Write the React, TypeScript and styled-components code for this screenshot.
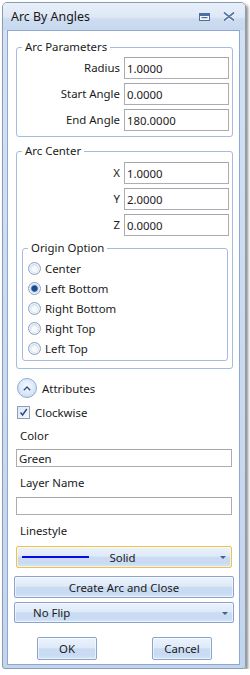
import React from 'react';
import styled, { createGlobalStyle } from 'styled-components';

const GlobalStyle = createGlobalStyle`
  html, body {
    margin: 0;
    padding: 0;
    background: #ffffff;
  }
  body {
    font-family: "Noto Sans", "Open Sans", sans-serif;
    font-size: 11.4px;
    color: #1a1a1a;
  }
`;

const Window = styled.div`
  box-sizing: border-box;
  margin: 2px 0 0 2px;
  width: 244px;
  height: 667px;
  border: 1px solid #8e9cb2;
  border-radius: 5px 5px 3px 3px;
  background: linear-gradient(#d3e1f2, #c3d5ec);
  box-shadow: 2px 2px 3px rgba(0, 0, 0, 0.45);
  display: flex;
  flex-direction: column;
  overflow: hidden;
`;

const TitleBar = styled.div`
  height: 27px;
  flex: none;
  display: flex;
  align-items: center;
  padding: 0 10px 0 8px;
  background: linear-gradient(#e6eef9 0%, #dfe9f6 50%, #cddcf0 60%, #c7d8ee 100%);
`;

const Title = styled.span`
  font-size: 12.4px;
  color: #161616;
`;

const TitleIcons = styled.div`
  margin-left: auto;
  display: flex;
  align-items: center;
  gap: 13px;
`;

const Frame = styled.div`
  flex: 1;
  display: flex;
  padding: 0 5px 3px 4px;
  min-height: 0;
`;

const Panel = styled.div`
  flex: 1;
  box-sizing: border-box;
  border: 1px solid #8ea9d1;
  background: #ffffff;
  padding: 9px 5px 0 6px;
  display: flex;
  flex-direction: column;
`;

const Group = styled.fieldset<{ $mt?: number; $ml?: number; $mr?: number; $pb?: number; $pt?: number }>`
  margin: ${p => p.$mt ?? 0}px ${p => p.$mr ?? 1}px 0 ${p => p.$ml ?? 2}px;
  border: 1px solid #a4bcde;
  border-radius: 3px;
  padding: ${p => p.$pt ?? 3}px 3px ${p => p.$pb ?? 5}px 5px;
  min-width: 0;
`;

const Legend = styled.legend`
  padding: 0 3px;
  line-height: 14px;
  color: #1a1a1a;
`;

const FieldGrid = styled.div`
  display: grid;
  grid-template-columns: 1fr 105px;
  column-gap: 4px;
  row-gap: 4px;
  align-items: center;
`;

const FieldLabel = styled.label`
  text-align: right;
  line-height: 14px;
`;

const TextBox = styled.input<{ $h?: number }>`
  box-sizing: border-box;
  width: 100%;
  height: ${p => p.$h ?? 22}px;
  margin: 0;
  border: 1px solid #abadb3;
  border-top-color: #a3a6ad;
  background: #ffffff;
  padding: 0 2px;
  font-family: inherit;
  font-size: inherit;
  color: #1a1a1a;
  outline: none;
`;

const RadioList = styled.div`
  display: flex;
  flex-direction: column;
`;

const RadioRow = styled.div`
  height: 20px;
  display: flex;
  align-items: center;
  gap: 4px;
`;

const RadioDot = styled.span<{ $checked?: boolean }>`
  box-sizing: border-box;
  width: 13px;
  height: 13px;
  border-radius: 50%;
  border: 1px solid #8da2bf;
  background: ${p =>
    p.$checked
      ? 'radial-gradient(circle, #1b4a8e 0 2.4px, #4f7bb8 3px, #cfdcec 3.8px, #e9f0f8 100%)'
      : 'radial-gradient(circle at 50% 55%, #f6f9fd 0 2.5px, #d3dfee 4.5px, #e8eef7 100%)'};
  box-shadow: inset 0 0 0 1px rgba(255, 255, 255, 0.7);
`;

const Stack = styled.div<{ $mt: number; $ml?: number }>`
  margin-top: ${p => p.$mt}px;
  margin-left: ${p => p.$ml ?? 0}px;
  display: flex;
  align-items: center;
`;

const ExpanderButton = styled.span`
  box-sizing: border-box;
  width: 20px;
  height: 20px;
  border-radius: 50%;
  border: 1px solid #8faad3;
  background: radial-gradient(circle at 50% 40%, #f7fbff 0, #d9e7f8 55%, #bcd2ef 100%);
  display: flex;
  align-items: center;
  justify-content: center;
  margin-right: 5px;
`;

const CheckBox = styled.span`
  box-sizing: border-box;
  width: 13px;
  height: 13px;
  border: 1px solid #8e9fb6;
  background: linear-gradient(135deg, #dce6f3, #f7f9fc);
  display: flex;
  align-items: center;
  justify-content: center;
  margin-right: 5px;
`;

const Caption = styled.div<{ $mt: number }>`
  margin: ${p => p.$mt}px 0 0 6px;
  line-height: 14px;
`;

const Field = styled.div<{ $mt: number }>`
  margin: ${p => p.$mt}px 2px 0 2px;
  display: flex;
`;

const blueGradient = `linear-gradient(#ebf2fc 0%, #dfeaf8 45%, #cadcf3 52%, #c8dbf3 80%, #d6e5f8 100%)`;

const ComboBox = styled.div<{ $mt: number; $focused?: boolean }>`
  box-sizing: border-box;
  margin: ${p => p.$mt}px ${p => (p.$focused ? 2 : 0)}px 0 ${p => (p.$focused ? 2 : 0)}px;
  height: ${p => (p.$focused ? 22 : 21)}px;
  border: 1px solid ${p => (p.$focused ? '#f2c343' : '#8aa5cc')};
  border-radius: 2px;
  background: ${blueGradient};
  box-shadow: inset 0 0 0 1px rgba(255, 255, 255, 0.55);
  display: grid;
  grid-template-columns: 1fr auto 1fr;
  align-items: center;
  padding: 0 5px;
`;

const LineSample = styled.span`
  width: 67px;
  height: 2px;
  background: #0a0ae6;
`;

const ComboText = styled.span<{ $center?: boolean }>`
  text-align: ${p => (p.$center ? 'center' : 'left')};
  padding-left: ${p => (p.$center ? 0 : 13)}px;
  margin-right: ${p => (p.$center ? 3 : 0)}px;
`;

const Arrow = styled.span`
  justify-self: end;
  width: 0;
  height: 0;
  border-left: 3px solid transparent;
  border-right: 3px solid transparent;
  border-top: 3px solid #40618f;
  margin-top: 1px;
`;

const WideButton = styled.button<{ $mt: number }>`
  box-sizing: border-box;
  margin: ${p => p.$mt}px 0 0 0;
  height: 22px;
  width: 100%;
  border: 1px solid #8aa5cc;
  border-radius: 2px;
  background: ${blueGradient};
  box-shadow: inset 0 0 0 1px rgba(255, 255, 255, 0.55);
  font-family: inherit;
  font-size: inherit;
  color: #1a1a1a;
  padding: 0;
`;

const ButtonRow = styled.div`
  margin-top: 14px;
  display: flex;
  gap: 55px;
  padding-left: 23px;
`;

const DialogButton = styled(WideButton)`
  width: 60px;
  height: 23px;
  margin: 0;
`;

const RestoreIcon = () => (
  <svg width="11" height="8" viewBox="0 0 11 8">
    <rect x="0.5" y="0.5" width="10" height="7" fill="#f4f8fd" stroke="#4b6fa3" />
    <rect x="1" y="1" width="9" height="2" fill="#4b6fa3" />
    <rect x="2.5" y="4" width="6" height="1.2" fill="#4b6fa3" />
  </svg>
);

const CloseIcon = () => (
  <svg width="12" height="9" viewBox="0 0 12 9">
    <path d="M1.5 1 L10.5 8 M10.5 1 L1.5 8" stroke="#ffffff" strokeWidth="3.4" strokeLinecap="round" />
    <path d="M1.5 1 L10.5 8 M10.5 1 L1.5 8" stroke="#5a7aaa" strokeWidth="2" strokeLinecap="round" />
  </svg>
);

const ChevronUp = () => (
  <svg width="8" height="5" viewBox="0 0 8 5">
    <path d="M0.8 4.2 L4 1 L7.2 4.2" fill="none" stroke="#2e4f82" strokeWidth="1.3" />
  </svg>
);

const CheckMark = () => (
  <svg width="9" height="9" viewBox="0 0 9 9">
    <path d="M1.5 4.5 L3.6 7 L7.8 1" fill="none" stroke="#2c4f8c" strokeWidth="1.5" />
  </svg>
);

const origins = ['Center', 'Left Bottom', 'Right Bottom', 'Right Top', 'Left Top'];

export default function App() {
  return (
    <>
      <GlobalStyle />
      <Window>
        <TitleBar>
          <Title>Arc By Angles</Title>
          <TitleIcons>
            <RestoreIcon />
            <CloseIcon />
          </TitleIcons>
        </TitleBar>
        <Frame>
          <Panel>
            <Group>
              <Legend>Arc Parameters</Legend>
              <FieldGrid>
                <FieldLabel>Radius</FieldLabel>
                <TextBox defaultValue="1.0000" />
                <FieldLabel>Start Angle</FieldLabel>
                <TextBox defaultValue="0.0000" />
                <FieldLabel>End Angle</FieldLabel>
                <TextBox defaultValue="180.0000" />
              </FieldGrid>
            </Group>

            <Group $mt={7} $pt={4} $pb={7}>
              <Legend>Arc Center</Legend>
              <FieldGrid>
                <FieldLabel>X</FieldLabel>
                <TextBox defaultValue="1.0000" />
                <FieldLabel>Y</FieldLabel>
                <TextBox defaultValue="2.0000" />
                <FieldLabel>Z</FieldLabel>
                <TextBox defaultValue="0.0000" />
              </FieldGrid>
              <Group $mt={5} $ml={0} $mr={1} $pt={3} $pb={2}>
                <Legend>Origin Option</Legend>
                <RadioList>
                  {origins.map(o => (
                    <RadioRow key={o}>
                      <RadioDot $checked={o === 'Left Bottom'} />
                      <span>{o}</span>
                    </RadioRow>
                  ))}
                </RadioList>
              </Group>
            </Group>

            <Stack $mt={9} $ml={3}>
              <ExpanderButton>
                <ChevronUp />
              </ExpanderButton>
              <span>Attributes</span>
            </Stack>
            <Stack $mt={7} $ml={3}>
              <CheckBox>
                <CheckMark />
              </CheckBox>
              <span>Clockwise</span>
            </Stack>

            <Caption $mt={9}>Color</Caption>
            <Field $mt={6}>
              <TextBox $h={18} defaultValue="Green" />
            </Field>
            <Caption $mt={9}>Layer Name</Caption>
            <Field $mt={7}>
              <TextBox $h={18} defaultValue="" />
            </Field>
            <Caption $mt={9}>Linestyle</Caption>

            <ComboBox $mt={8} $focused>
              <LineSample />
              <ComboText $center>Solid</ComboText>
              <Arrow />
            </ComboBox>
            <WideButton $mt={8}>Create Arc and Close</WideButton>
            <ComboBox $mt={4}>
              <ComboText>No Flip</ComboText>
              <span />
              <Arrow />
            </ComboBox>

            <ButtonRow>
              <DialogButton $mt={0}>OK</DialogButton>
              <DialogButton $mt={0}>Cancel</DialogButton>
            </ButtonRow>
          </Panel>
        </Frame>
      </Window>
    </>
  );
}
